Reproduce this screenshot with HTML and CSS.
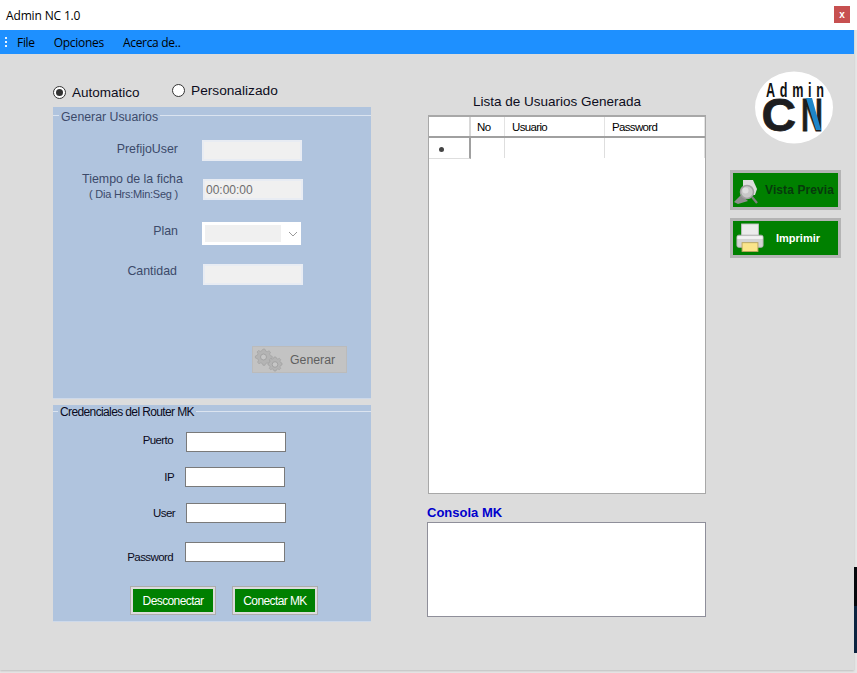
FILE: index.html
```html
<!DOCTYPE html>
<html lang="es">
<head>
<meta charset="utf-8">
<title>Admin NC 1.0</title>
<link rel="stylesheet" href="styles.css">
</head>
<body>
<div class="window">
  <header class="titlebar">
    <span class="title">Admin NC 1.0</span>
    <button class="close">x</button>
  </header>
  <nav class="menubar">
    <span class="grip"></span>
    <span class="menu-item m-file">File</span>
    <span class="menu-item m-opc">Opciones</span>
    <span class="menu-item m-ace">Acerca de..</span>
  </nav>
  <main class="form">
    <section class="left">
      <div class="modes">
        <label class="radio r-auto"><span class="dot on"></span>Automatico</label>
        <label class="radio r-pers"><span class="dot"></span>Personalizado</label>
      </div>
      <div class="group g-gen">
        <div class="legend l-gen"><span>Generar Usuarios</span></div>
        <div class="field f1"><span class="lbl muted">PrefijoUser</span><span class="box off"></span></div>
        <div class="field f2"><span class="lbl muted two">Tiempo de la ficha<small>( Dia Hrs:Min:Seg )</small></span><span class="box off time">00:00:00</span></div>
        <div class="field f3"><span class="lbl muted">Plan</span>
          <span class="combo"><span class="combo-in"></span><svg class="chev" width="10" height="6" viewBox="0 0 10 6"><path d="M1 1l4 4 4-4" fill="none" stroke="#9a9a9a"/></svg></span></div>
        <div class="field f4"><span class="lbl muted">Cantidad</span><span class="box off"></span></div>
        <div class="gen-row">
          <button class="gen">
            <svg width="30" height="26" viewBox="0 0 30 26"><g fill="#b4b4b4" stroke="#a2a2a2" stroke-width=".7"><path d="M9 2l2 .2.6 1.800 1.700.7 1.700-.9 1.500 1.400-.9 1.800.7 1.600 1.900.7v2l-1.900.6-.7 1.700.9 1.700-1.500 1.400-1.700-.9-1.700.7-.6 1.800h-2l-.6-1.800-1.700-.7-1.700.9-1.400-1.400.9-1.700-.7-1.700L1.400 11V9l1.900-.7.700-1.600-.9-1.800L4.500 3.500l1.700.9 1.700-.7z"/><path d="M20 10l2 0 .5 1.500 1.400.6 1.500-.8 1.300 1.300-.8 1.500.6 1.400 1.500.5v2l-1.500.5-.6 1.400.8 1.500-1.300 1.300-1.500-.8-1.400.6-.5 1.500h-2l-.5-1.500-1.400-.6-1.500.8-1.300-1.300.8-1.500-.6-1.400-1.500-.5v-2l1.500-.5.6-1.400-.8-1.500 1.300-1.300 1.500.8 1.400-.6z"/></g><circle cx="9.500" cy="10" r="3" fill="#c6c6c6" stroke="#a2a2a2"/><circle cx="21" cy="17.500" r="2.800" fill="#c6c6c6" stroke="#a2a2a2"/></svg>
            <span>Generar</span>
          </button>
        </div>
      </div>
      <div class="group g-cred">
        <div class="legend l-cred"><span>Credenciales del Router MK</span></div>
        <div class="field c1"><span class="lbl">Puerto</span><span class="box on"></span></div>
        <div class="field c2"><span class="lbl">IP</span><span class="box on"></span></div>
        <div class="field c3"><span class="lbl">User</span><span class="box on"></span></div>
        <div class="field c4"><span class="lbl">Password</span><span class="box on"></span></div>
        <div class="actions">
          <button class="green small">Desconectar</button>
          <button class="green small">Conectar MK</button>
        </div>
      </div>
    </section>
    <section class="center">
      <h2 class="grid-title">Lista de Usuarios Generada</h2>
      <div class="grid">
        <div class="row head"><span class="c0"></span><span class="c-no">No</span><span class="c-us">Usuario</span><span class="c-pw">Password</span></div>
        <div class="row body"><span class="c0"><i></i></span><span class="c-no"></span><span class="c-us"></span><span class="c-pw"></span></div>
      </div>
      <h3 class="console-title">Consola MK</h3>
      <div class="console"></div>
    </section>
    <aside class="right">
      <svg class="logo" width="80" height="74" viewBox="0 0 80 74">
        <ellipse cx="39" cy="36.500" rx="39" ry="36" fill="#fff"/>
        <text class="logo-admin" transform="translate(11 26) scale(.65 1)" x="0" y="0">Admin</text>
        <text class="logo-cn" transform="translate(6.500 59.500) scale(1.040 1)" x="0" y="0">C</text>
        <text class="logo-cn" transform="translate(46 59.500) scale(.66 1)" x="0" y="0">N</text>
        <path d="M51 27h6l9 32h-5z" fill="#1f86c9"/>
      </svg>
      <button class="action preview">
        <svg width="30" height="30" viewBox="0 0 30 30"><path d="M10 5h10l4 9-2 6H10z" fill="#dcdcdc"/><path d="M1 27l7-7 7 6-10 3z" fill="#8f8f8f"/><circle cx="14" cy="17" r="6.500" fill="#c8c8c8" stroke="#a0a0a0" stroke-width="1.500"/><circle cx="12.500" cy="15.500" r="3" fill="#dedede"/><path d="M19 22l5 6" stroke="#808080" stroke-width="2.200"/></svg>
        <span>Vista Previa</span>
      </button>
      <button class="action print">
        <svg width="28" height="30" viewBox="0 0 30 32"><rect x="6" y="1" width="18" height="13" fill="#ececec" stroke="#c4c4c4"/><path d="M3 13h24q2 0 2 2v9q0 2-2 2H3q-2 0-2-2v-9q0-2 2-2z" fill="#d4d4d4" stroke="#b2b2b2"/><rect x="1.500" y="14" width="27" height="3" fill="#f2f2f2"/><rect x="6.500" y="21" width="17" height="9.500" fill="#fbe58b" stroke="#b9a560"/></svg>
        <span>Imprimir</span>
      </button>
    </aside>
  </main>
</div>
<div class="backdrop"></div>
</body>
</html>
```
FILE: styles.css
```css
* { box-sizing: border-box; }
html, body { margin: 0; padding: 0; }
body { width: 857px; height: 673px; overflow: hidden; background: #e6e6e6; position: relative; font-family: "Liberation Sans", Arial, sans-serif; font-size: 12px; color: #000; }
button { font-family: inherit; padding: 0; cursor: default; }

.window { width: 854px; height: 670px; background: #dcdcdc; box-shadow: 0 1px 2px #bdbdbd; display: flex; flex-direction: column; }
.backdrop { position: absolute; left: 854px; top: 567px; width: 3px; height: 86px; background: linear-gradient(#05080c 0 45%, #0a2440 45%); }

.titlebar { height: 30px; flex: none; background: #fff; display: flex; align-items: center; padding: 0 4px 0 6px; width: 857px; }
.title { font-family: "Open Sans", sans-serif; font-size: 12px; letter-spacing: -.15px; flex: 1; }
.close { width: 16px; height: 17px; margin: -1px 3px 0 0; background: #c75050; color: #fff; border: 0; font-size: 10px; font-weight: bold; line-height: 15px; }

.menubar { height: 24px; flex: none; background: #1e90ff; display: flex; align-items: center; font-family: "Open Sans", sans-serif; font-size: 12px; letter-spacing: -.3px; position: relative; }
.grip { width: 2px; height: 11px; margin-left: 5px; background: repeating-linear-gradient(#e8f3ff 0 2px, transparent 2px 4px); }
.m-file { margin-left: 10px; }
.m-opc { margin-left: 19px; }
.m-ace { margin-left: 19px; }

.form { flex: 1; display: flex; align-items: flex-start; padding-top: 0; }

.left { width: 318px; margin-left: 53px; }
.modes { display: flex; height: 53px; padding-top: 27px; }
.radio { display: flex; align-items: center; height: 20px; font-size: 13.500px; color: #0c0c20; }
.r-auto { margin-right: 32px; margin-top: 1px; width: 87px; white-space: nowrap; }
.r-pers { margin-top: -1px; white-space: nowrap; font-size: 13.700px; }
.dot { width: 13px; height: 13px; border-radius: 50%; background: #fff; border: 1px solid #333; margin-right: 6px; flex: none; display: flex; align-items: center; justify-content: center; }
.dot.on::after { content: ""; width: 7px; height: 7px; border-radius: 50%; background: #333; }

.group { background: #b0c4de; }
.g-gen { height: 292px; border-bottom: 1px solid #cdd9ea; }
.g-cred { height: 217px; margin-top: 6px; border-bottom: 1px solid #cdd9ea; }

.legend { height: 19px; position: relative; display: flex; padding-left: 6px; }
.legend::before { content: ""; position: absolute; left: 0; right: 0; top: 8px; height: 1px; background: #dbe4f0; }
.legend span { position: relative; background: #b0c4de; padding: 0 2px; height: 15px; line-height: 15px; }
.l-gen span { color: #3c4a6a; font-size: 12.300px; margin-top: 3px; }
.l-cred::before { top: 6px; }
.l-cred { padding-left: 5px; }
.l-cred span { color: #0a0a20; margin-top: 0; letter-spacing: -.62px; }

.field { display: flex; align-items: center; }
.lbl { display: block; text-align: right; color: #0a0a20; font-size: 11.500px; letter-spacing: -.6px; white-space: nowrap; }
.lbl.muted { color: #3c4a6a; font-size: 12.400px; letter-spacing: 0; width: 125px; }
.lbl.two { text-align: center; line-height: 15px; }
.lbl small { display: block; font-size: 11px; letter-spacing: -.25px; padding-left: 2px; }
.box { display: block; width: 100px; height: 21px; }
.box.off { background: #f0f0f0; border: 2px solid #e8ecf3; }
.box.on { background: #fff; border: 1px solid #7a7a7a; height: 20px; }
.time { color: #6d6d6d; font-size: 12px; line-height: 17px; padding: 1px 0 0 1px; }

.f1 { margin-top: 14px; height: 21px; }
.f1 .lbl { margin-top: -3px; }
.f1 .box { margin-left: 24px; }
.f2 { margin-top: 18px; height: 21px; }
.f2 .lbl { margin-top: -5px; width: 159px; }
.f2 .box { margin-left: -9px; }
.f3 { margin-top: 22px; height: 23px; }
.f3 .lbl { margin-top: -5px; }
.combo { margin-left: 24px; width: 99px; height: 23px; background: #fff; padding: 3px; display: flex; align-items: center; }
.combo-in { width: 76px; height: 17px; background: #f0f0f0; }
.chev { margin-left: 7px; }
.f4 { margin-top: 19px; height: 21px; }
.f4 .lbl { margin-top: -8px; margin-left: -1px; }
.f4 .box { margin-left: 26px; }
.gen-row { margin-top: 61px; padding-left: 199px; }
.gen { width: 95px; height: 27px; background: #c3c3c3; border: 1px solid #bbb; display: flex; align-items: center; color: #5f5f5f; font-size: 12.300px; padding-top: 1px; }
.gen svg { margin: 0 6px 0 1px; flex: none; }

.c1 { height: 20px; margin-top: 8px; }
.c1 .lbl { width: 120px; margin-top: -4px; }
.c1 .box { margin-left: 13px; }
.c2 { height: 20px; margin-top: 15px; }
.c2 .lbl { width: 121px; }
.c2 .box { margin-left: 11px; }
.c3 { height: 20px; margin-top: 16px; }
.c3 .lbl { width: 122px; margin-top: -1px; }
.c3 .box { margin-left: 11px; }
.c4 { height: 20px; margin-top: 20px; }
.c4 .lbl { width: 120px; margin-top: 8px; }
.c4 .box { margin-left: 12px; margin-top: -2px; }
.actions { display: flex; gap: 16px; padding-left: 77px; margin-top: 23px; }
.green { background: #008000; color: #fff; font-size: 12px; letter-spacing: -.6px; }
.small { width: 86px; height: 29px; border: 3px solid #dcdcdc; outline: 1px solid #acacac; outline-offset: -1px; }

.center { width: 279px; margin-left: 56px; }
.grid-title { margin: 40px 0 0 46px; height: 21px; font-size: 13.500px; font-weight: normal; line-height: 16px; color: #0c0c20; white-space: nowrap; }
.grid { height: 379px; margin-left: 1px; width: 278px; background: #fff; border: 1px solid #a8a8a8; border-top-width: 2px; }
.row { display: flex; }
.head { height: 21px; border-bottom: 2px solid #a0a0a0; font-size: 11.500px; letter-spacing: -.65px; }
.head span { line-height: 20px; padding-left: 7px; border-right: 1px solid #e3e3e3; }
.body { height: 20px; }
.body span { border-right: 1px solid #dedede; }
.c0 { width: 42px; flex: none; }
.head .c0 { border-right: 2px solid #d8d8d8; }
.body .c0 { border-right: 2px solid #a0a0a0; border-bottom: 1px solid #dedede; height: 21px; display: flex; align-items: center; padding: 2px 0 0 10px; }
.body .c0 i { width: 5px; height: 5px; border-radius: 50%; background: #444; }
.c-no { width: 34px; flex: none; }
.head .c-no { padding-left: 6px; }
.c-us { width: 100px; flex: none; }
.c-pw { flex: 1; }
.console-title { margin: 12px 0 0; height: 16px; color: #0000cd; font-size: 13px; line-height: 13px; font-weight: bold; }
.console { height: 95px; background: #fff; border: 1px solid #8f8f9a; }

.right { width: 111px; margin-left: 24px; display: flex; flex-direction: column; align-items: flex-start; }
.logo { margin: 17px 0 0 25px; }
.logo-admin { font-family: "Liberation Sans", sans-serif; font-weight: bold; font-size: 19.400px; letter-spacing: 7.200px; fill: #111; }
.logo-cn { font-family: "Liberation Sans", sans-serif; font-weight: bold; font-size: 46px; fill: #1d1d1f; stroke: #1d1d1f; stroke-width: .8px; }
.action { width: 111px; height: 40px; border: 3px solid #b4b4b4; background: #008000; display: flex; align-items: center; font-size: 12px; font-weight: bold; white-space: nowrap; flex: none; }
.preview { margin-top: 25px; color: #073a0c; letter-spacing: .1px; }
.preview svg { margin: 0 2px 0 0; flex: none; }
.print { margin-top: 8px; color: #fff; font-size: 11px; }
.print svg { margin: 0 12px 0 3px; flex: none; }
```
